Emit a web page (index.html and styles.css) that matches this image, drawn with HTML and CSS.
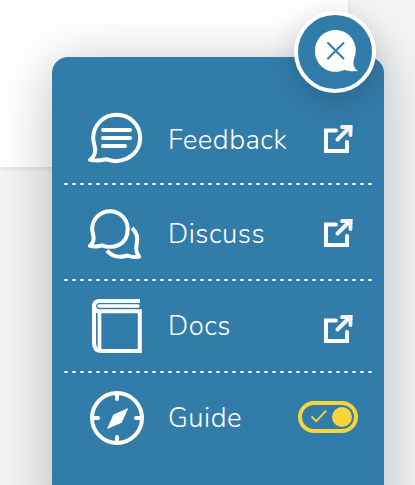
FILE: index.html
```html
<!DOCTYPE html>
<html lang="en">
<head>
<meta charset="utf-8">
<title>Help menu</title>
<link rel="stylesheet" href="styles.css">
</head>
<body>
<svg class="defs" aria-hidden="true">
  <symbol id="external" viewBox="296 118 64 40">
    <path d="M336 130.500H326V151H347V142" fill="none" stroke="#fff" stroke-width="4" stroke-linecap="round"/>
    <path d="M324 129h4v4h-4zM324 149h4v4h-4zM345 149h4v4h-4z" fill="#fff"/>
    <path d="M337.500 139.500L349 128" stroke="#f3f4f6" stroke-width="4" stroke-linecap="round"/>
    <path d="M342 127H350.500V135" fill="none" stroke="#f3f4f6" stroke-width="3.800" stroke-linecap="round"/>
    <path d="M347 125.100h5.400v5.400z" fill="#f3f4f6"/>
  </symbol>
</svg>
<main class="stage">
  <div class="sheet"></div>
  <nav class="panel">
    <a class="row">
      <svg class="icon" viewBox="86 108 60 60" fill="none" stroke="#fff" stroke-width="4" stroke-linecap="round" stroke-linejoin="round">
        <path d="M106 159.200C112 161.600 120 161.800 127 158.500C135 154.700 140.200 147 140.200 138C140.200 124.800 129.800 114.800 116.600 114.800C103.400 114.800 93.200 125.200 93.200 138C93.200 142.500 95.200 146.500 95.200 149.500C95.200 154.500 93.500 157.500 90 159.900C96 161.400 101 160.500 106 159.200Z"/>
        <path d="M103 130H130M103 138H130M103 146H125"/>
      </svg>
      <span class="label upper">Feedback</span>
      <svg class="action"><use href="#external"/></svg>
    </a>
    <a class="row tall">
      <svg class="icon" viewBox="86 202 60 60" fill="none" stroke="#fff" stroke-width="4" stroke-linejoin="round">
        <path d="M102 245.300C106 247 113 247.700 118.500 245.100C124.500 242.300 127.700 236 127.700 229C127.700 218.900 119.800 211.200 110 211.200C100.200 211.200 92.200 219 92.200 229C92.200 232.500 93.600 234.500 93.600 238C93.600 242 92 244.200 89.800 245.800C94.500 246.800 98.500 246.500 102 245.300Z"/>
        <path d="M132 228C137 232.500 138.100 238.500 136.700 244C135.500 249.500 136.500 253.500 139.200 256.600C135 257.500 131 257 127.500 255.500C120.500 258 112 257 107 250.500"/>
      </svg>
      <span class="label upper">Discuss</span>
      <svg class="action"><use href="#external"/></svg>
    </a>
    <a class="row">
      <svg class="icon" viewBox="86 296 60 60" fill="none" stroke="#fff" stroke-width="4">
        <path d="M140 301H99.500Q94 301 94 307V343Q94 351 102 351H139.800V311.200H99Q94.500 311 94 306"/>
        <path d="M99.500 311V349" stroke-width="3.700"/>
        <path d="M99 306H138" stroke-width="3.400" stroke-linecap="round"/>
      </svg>
      <span class="label">Docs</span>
      <svg class="action lowered"><use href="#external"/></svg>
    </a>
    <a class="row last">
      <svg class="icon" viewBox="86 388 60 60" fill="none" stroke="#fff" stroke-width="4">
        <circle cx="117" cy="418" r="25"/>
        <path d="M117 394V399M117 437V442M93 418H98M136 418H141" stroke-linecap="round"/>
        <path d="M128.300 408.100L121.700 422.700L107 429L113.300 414.800Z" fill="#fff" stroke="none"/>
      </svg>
      <span class="label">Guide</span>
      <svg class="action" viewBox="296 398 64 40" fill="none" stroke="#f9d43b">
        <rect x="300" y="403" width="56" height="28" rx="14" stroke-width="4"/>
        <circle cx="342" cy="417" r="10" fill="#f9d43b" stroke="none"/>
        <path d="M311.500 416.500L316.200 421.200L326.200 410.700" stroke-width="1.800"/>
      </svg>
    </a>
    <button class="close" aria-label="Close">
      <svg viewBox="298 15 74 74">
        <path d="M335.400 30C347 30 355.800 39 355.800 50.500C355.800 55 353.400 58.500 353.400 62.500C353.400 67 355.500 69.500 358 70.700C353.500 71.700 348.500 71.200 344.500 69.700C341.500 71.300 338.500 71.700 335.400 71.700C324 71.700 315 62.400 315 50.900C315 39.300 324 30 335.400 30Z" fill="#fff"/>
        <path d="M328 43L343.500 58.500M343.500 43L328 58.500" stroke="#327ca9" stroke-width="2" stroke-linecap="round"/>
      </svg>
    </button>
  </nav>
</main>
</body>
</html>
```

FILE: styles.css
```css
* { box-sizing: border-box; }
body {
  margin: 0;
  background: #f3f4f6;
  font-family: Nunito, "Open Sans", sans-serif;
}
.defs { position: absolute; width: 0; height: 0; }
.stage { position: relative; width: 415px; height: 485px; overflow: hidden; }
.sheet {
  width: 348px;
  height: 167px;
  background: #fff;
  box-shadow: 0 1px 6px rgba(0, 0, 0, .1);
}
.panel {
  position: absolute;
  top: 57px;
  left: 52px;
  width: 332px;
  height: 480px;
  padding: 36px 12px 0;
  border-radius: 16px;
  background: #327ca9;
  box-shadow: 0 8px 56px rgba(0, 0, 0, .25);
}
.row {
  display: flex;
  align-items: center;
  height: 92px;
  padding: 0 12px 2px 22px;
  color: #fff;
  background: repeating-linear-gradient(90deg, #b7d3e2 0 1px, #fff 1px 3px, #b7d3e2 3px 4px, transparent 4px 8px) bottom / 100% 2px no-repeat;
}
.row.tall { height: 96px; }
.row.last { background: none; }
.icon { flex: none; width: 60px; height: 60px; margin-right: 22px; }
.label {
  flex: 1;
  font-size: 27.500px;
  line-height: 40px;
  font-weight: 300;
  letter-spacing: .5px;
  white-space: nowrap;
}
.upper { margin-top: 4px; }
.action { flex: none; width: 64px; height: 40px; }
.lowered { margin-top: 4px; }
.close {
  position: absolute;
  top: -46px;
  left: 242px;
  width: 82px;
  height: 82px;
  padding: 0;
  border: 4px solid #fff;
  border-radius: 50%;
  background: #327ca9;
  box-shadow: 0 8px 32px rgba(0, 0, 0, .18);
}
.close svg { display: block; width: 74px; height: 74px; }
```
